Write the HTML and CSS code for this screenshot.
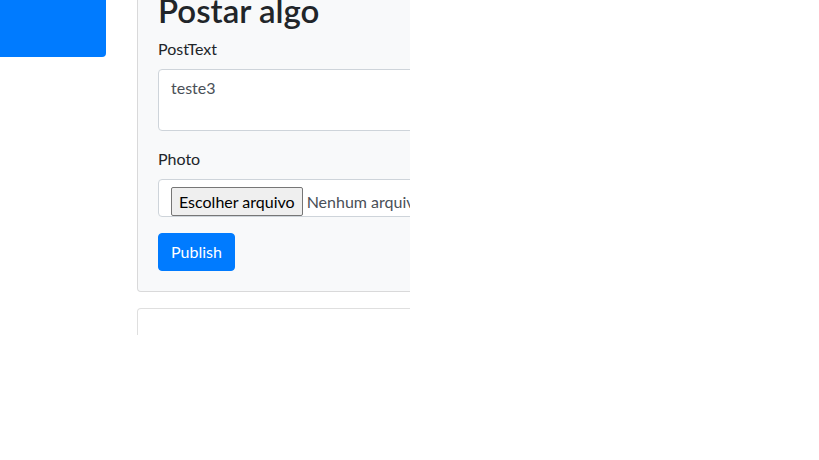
FILE: index.html
```html
<!DOCTYPE html>
<html lang="pt">
<head>
<meta charset="utf-8">
<title>Postar algo</title>
<link rel="stylesheet" href="styles.css">
</head>
<body>
<div class="viewport">
  <div class="page">
    <aside class="side">
      <div class="side-block"></div>
    </aside>
    <main class="main">
      <section class="card card-light">
        <div class="card-body">
          <h2 class="title">Postar algo</h2>
          <div class="form-group">
            <label class="label">PostText</label>
            <div class="textarea">teste3</div>
          </div>
          <div class="form-group">
            <label class="label">Photo</label>
            <div class="file-input">
              <span class="file-btn">Escolher arquivo</span>
              <span class="file-name">Nenhum arquivo escolhido</span>
            </div>
          </div>
          <button class="btn-primary">Publish</button>
        </div>
      </section>
      <section class="card card-white">
        <div class="card-body"></div>
      </section>
    </main>
  </div>
</div>
</body>
</html>
```

FILE: styles.css
```css
html, body {
  margin: 0;
  padding: 0;
  background: #fff;
}
body {
  font-family: Lato, "Noto Sans", sans-serif;
  font-size: 16px;
  line-height: 1.5;
  color: #212529;
}
.viewport {
  width: 410px;
  height: 335px;
  overflow: hidden;
}
.page {
  display: flex;
  margin-top: -30px;
}
.side {
  flex: 0 0 137px;
  width: 137px;
}
.side-block {
  margin-left: -10px;
  width: 116px;
  height: 87px;
  background: #007bff;
  border-radius: 4px;
}
.main {
  flex: 0 0 560px;
  width: 560px;
}
.card {
  border: 1px solid rgba(0, 0, 0, 0.125);
  border-radius: 4px;
  margin-bottom: 16px;
}
.card-light {
  background: #f8f9fa;
}
.card-white {
  background: #fff;
  min-height: 60px;
}
.card-body {
  padding: 20px;
}
.title {
  margin: 0 0 8px;
  font-size: 33px;
  font-weight: 600;
  line-height: 38.4px;
}
.form-group {
  margin-bottom: 16px;
}
.label {
  display: block;
  margin-bottom: 8px;
}
.textarea {
  box-sizing: border-box;
  height: 62px;
  padding: 6px 12px;
  background: #fff;
  border: 1px solid #ced4da;
  border-radius: 4px;
  color: #495057;
}
.file-input {
  box-sizing: border-box;
  height: 38px;
  padding: 7px 12px 0;
  background: #fff;
  border: 1px solid #ced4da;
  border-radius: 4px;
  display: flex;
  align-items: flex-start;
  white-space: nowrap;
  color: #495057;
}
.file-btn {
  box-sizing: border-box;
  height: 29px;
  padding: 1px 7px 0;
  margin-right: 4px;
  background: #efefef;
  border: 1px solid #767676;
  border-radius: 2px;
  color: #000;
  line-height: 25px;
}
.file-name {
  line-height: 29px;
}
.btn-primary {
  font: inherit;
  line-height: 1.5;
  padding: 6px 12px;
  color: #fff;
  background: #007bff;
  border: 1px solid #007bff;
  border-radius: 4px;
}
```
